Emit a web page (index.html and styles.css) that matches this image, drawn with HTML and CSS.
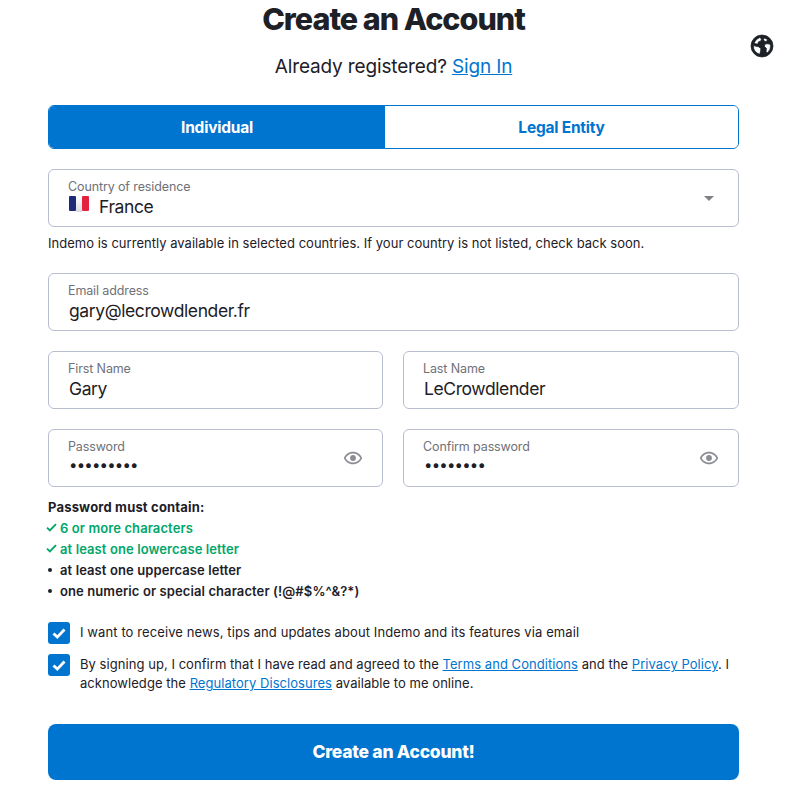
FILE: index.html
```html
<!DOCTYPE html>
<html lang="en">
<head>
<meta charset="utf-8">
<title>Create an Account</title>
<link rel="stylesheet" href="styles.css">
</head>
<body>
<button class="globe" aria-label="Language">
  <svg viewBox="0 0 24 24" width="24" height="24"><path fill="#1d2026" stroke="#1d2026" stroke-width=".7" fill-rule="evenodd" d="M12 1a11 11 0 1 0 0 22 11 11 0 0 0 0-22zM9.800 3.500 11.500 5 10.800 7 8.500 7.800 7.800 10 5.300 9.800 4.400 8.500A9 9 0 0 1 9.800 3.500zM3.400 11.500 6 12.300 8.600 12.800 10.800 14.500 10.600 17 9.800 20.300A9 9 0 0 1 3.400 11.500zM14.200 4 17.500 5.500 16.500 7.500 14.500 7.300 13.500 5.500zM15 10 18 9.800 20.500 10.500A9 9 0 0 1 17.500 18.800L16 17.800 16.500 14.500 14.500 12.500z"/></svg>
</button>
<main class="page">
  <h1 class="title">Create an Account</h1>
  <p class="signin">Already registered? <a href="#">Sign In</a></p>
  <div class="tabs">
    <button class="tab tab-active">Individual</button>
    <button class="tab">Legal Entity</button>
  </div>
  <div class="field field-select">
    <span class="label">Country of residence</span>
    <span class="value"><svg class="flag" viewBox="0 0 20 16" width="20" height="16"><defs><linearGradient id="flagmid" x1="0" y1="0" x2="0" y2="1"><stop offset="0" stop-color="#ffffff"/><stop offset="1" stop-color="#d9d9e2"/></linearGradient></defs><rect width="7" height="15" rx="1" fill="#1c2a78"/><rect x="7" width="6" height="16" fill="url(#flagmid)"/><rect x="13" width="7" height="15" rx="1" fill="#e2223f"/></svg>France</span>
    <span class="caret"></span>
  </div>
  <p class="note">Indemo is currently available in selected countries. If your country is not listed, check back soon.</p>
  <div class="field field-email">
    <span class="label">Email address</span>
    <span class="value">gary@lecrowdlender.fr</span>
  </div>
  <div class="row">
    <div class="field"><span class="label">First Name</span><span class="value">Gary</span></div>
    <div class="field"><span class="label">Last Name</span><span class="value">LeCrowdlender</span></div>
  </div>
  <div class="row">
    <div class="field">
      <span class="label">Password</span><span class="value dots">•••••••••</span>
      <svg class="eye" viewBox="0 0 24 24" width="20" height="20"><path fill="#8b8d93" d="M12 4.500C7 4.500 2.700 7.600 1 12c1.700 4.400 6 7.500 11 7.500s9.300-3.100 11-7.500c-1.700-4.400-6-7.500-11-7.500zm0 13c-3.800 0-7.200-2.200-8.800-5.500C4.800 8.700 8.200 6.500 12 6.500s7.200 2.200 8.800 5.500c-1.600 3.300-5 5.500-8.800 5.500z"/><circle cx="12" cy="12" r="3.500" fill="#8b8d93"/></svg>
    </div>
    <div class="field">
      <span class="label">Confirm password</span><span class="value dots">••••••••</span>
      <svg class="eye" viewBox="0 0 24 24" width="20" height="20"><path fill="#8b8d93" d="M12 4.500C7 4.500 2.700 7.600 1 12c1.700 4.400 6 7.500 11 7.500s9.300-3.100 11-7.500c-1.700-4.400-6-7.500-11-7.500zm0 13c-3.800 0-7.200-2.200-8.800-5.500C4.800 8.700 8.200 6.500 12 6.500s7.200 2.200 8.800 5.500c-1.600 3.300-5 5.500-8.800 5.500z"/><circle cx="12" cy="12" r="3.500" fill="#8b8d93"/></svg>
    </div>
  </div>
  <section class="rules">
    <h2 class="rules-title">Password must contain:</h2>
    <ul class="rules-list">
      <li class="rule ok"><svg class="mark" viewBox="0 0 12 10" width="11" height="9"><path d="M1 5.200l3.200 3L11 1.300" fill="none" stroke="#00a66a" stroke-width="2.100"/></svg>6 or more characters</li>
      <li class="rule ok"><svg class="mark" viewBox="0 0 12 10" width="11" height="9"><path d="M1 5.200l3.200 3L11 1.300" fill="none" stroke="#00a66a" stroke-width="2.100"/></svg>at least one lowercase letter</li>
      <li class="rule"><span class="dot"></span>at least one uppercase letter</li>
      <li class="rule"><span class="dot"></span>one numeric or special character (!@#$%^&amp;?*)</li>
    </ul>
  </section>
  <div class="check">
    <span class="box"><svg viewBox="0 0 22 22" width="22" height="22"><path d="M5.500 11.500l3.800 3.600 7.200-7.600" fill="none" stroke="#fff" stroke-width="2.800"/></svg></span>
    <p class="check-text">I want to receive news, tips and updates about Indemo and its features via email</p>
  </div>
  <div class="check check-second">
    <span class="box"><svg viewBox="0 0 22 22" width="22" height="22"><path d="M5.500 11.500l3.800 3.600 7.200-7.600" fill="none" stroke="#fff" stroke-width="2.800"/></svg></span>
    <p class="check-text">By signing up, I confirm that I have read and agreed to the <a href="#">Terms and Conditions</a> and the <a href="#">Privacy Policy</a>. I acknowledge the <a href="#">Regulatory Disclosures</a> available to me online.</p>
  </div>
  <button class="submit">Create an Account!</button>
</main>
</body>
</html>
```
FILE: styles.css
```css
* { box-sizing: border-box; }
html, body { margin: 0; padding: 0; background: #fff; }
body {
  position: relative;
  height: 800px;
  overflow: hidden;
  font-family: Inter, "Liberation Sans", sans-serif;
  color: #1d2026;
}
a { color: #0075d0; text-decoration: underline; }
.page { width: 691px; margin-left: 48px; }
.globe {
  position: absolute;
  left: 750px;
  top: 34px;
  width: 24px;
  height: 24px;
  padding: 0;
  border: 0;
  background: none;
}
.globe svg { display: block; }
.title {
  margin: 0;
  height: 38px;
  font-size: 30.500px;
  line-height: 38px;
  font-weight: 800;
  letter-spacing: -1px;
  text-align: center;
}
.signin {
  margin: 17px 0 0;
  height: 24px;
  font-size: 19px;
  line-height: 24px;
  letter-spacing: -0.15px;
  text-align: center;
}
.tabs {
  display: flex;
  height: 44px;
  margin-top: 26px;
  border: 1px solid #0075d0;
  border-radius: 6px;
  overflow: hidden;
}
.tab {
  flex: 1;
  border: 0;
  padding: 2px 0 0;
  background: #fff;
  color: #0075d0;
  font: 700 15.500px/20px Inter, "Liberation Sans", sans-serif;
  letter-spacing: -0.22px;
}
.tab-active { flex: 0 0 336px; background: #0075d0; color: #fff; }
.field {
  position: relative;
  height: 58px;
  padding: 9px 19px 0;
  border: 1px solid #b9bdd0;
  border-radius: 6px;
  background: #fff;
}
.field-select { margin-top: 20px; }
.field-email { margin-top: 20px; }
.label {
  display: block;
  font-size: 12.500px;
  line-height: 16px;
  letter-spacing: -0.12px;
  color: #6f7177;
}
.value {
  display: flex;
  align-items: center;
  margin-top: 1px;
  padding-left: 1px;
  font-size: 17.500px;
  line-height: 22px;
  letter-spacing: -0.4px;
  color: #1d2026;
}
.dots {
  margin-top: -1px;
  font-size: 15px;
  letter-spacing: -0.8px;
}
.flag { margin-right: 10px; margin-top: -6px; }
.caret {
  position: absolute;
  right: 24px;
  top: 26px;
  border-style: solid;
  border-width: 5px 5px 0;
  border-color: #808186 transparent transparent;
}
.eye { position: absolute; right: 19px; top: 18px; }
.note {
  margin: 8px 0 0;
  height: 16px;
  font-size: 13px;
  line-height: 16px;
  letter-spacing: 0.02px;
}
.row {
  display: grid;
  grid-template-columns: 335px 336px;
  gap: 20px;
  margin-top: 20px;
}
.note + .field { margin-top: 22px; }
.rules { margin-top: 10px; }
.rules-title {
  margin: 0;
  font-size: 13px;
  line-height: 21px;
  font-weight: 700;
  letter-spacing: 0.18px;
}
.rules-list { list-style: none; margin: 0; padding: 0; }
.rule {
  display: flex;
  align-items: center;
  height: 21px;
  padding-bottom: 2px;
  font-size: 13px;
  font-weight: 600;
  letter-spacing: 0.1px;
}
.rule.ok { color: #00a66a; }
.mark { width: 11px; margin-left: -2px; margin-right: 3px; }
.dot {
  width: 4px;
  height: 4px;
  margin: 0 8px 0 0;
  border-radius: 50%;
  background: #1d2026;
}
.check { display: flex; gap: 10px; margin-top: 20px; }
.check-second { margin-top: 10px; }
.box {
  flex: none;
  width: 22px;
  height: 22px;
  border-radius: 3px;
  background: #0075d0;
}
.box svg { display: block; }
.check-text {
  margin: 1px 0 0;
  font-size: 13px;
  line-height: 19px;
  letter-spacing: 0.1px;
}
.check-second .check-text { letter-spacing: 0.05px; }
.submit {
  display: block;
  width: 100%;
  height: 56px;
  margin-top: 31px;
  border: 0;
  border-radius: 8px;
  background: #0075d0;
  color: #fff;
  font: 800 17.500px/20px Inter, "Liberation Sans", sans-serif;
  letter-spacing: -0.25px;
}
```
